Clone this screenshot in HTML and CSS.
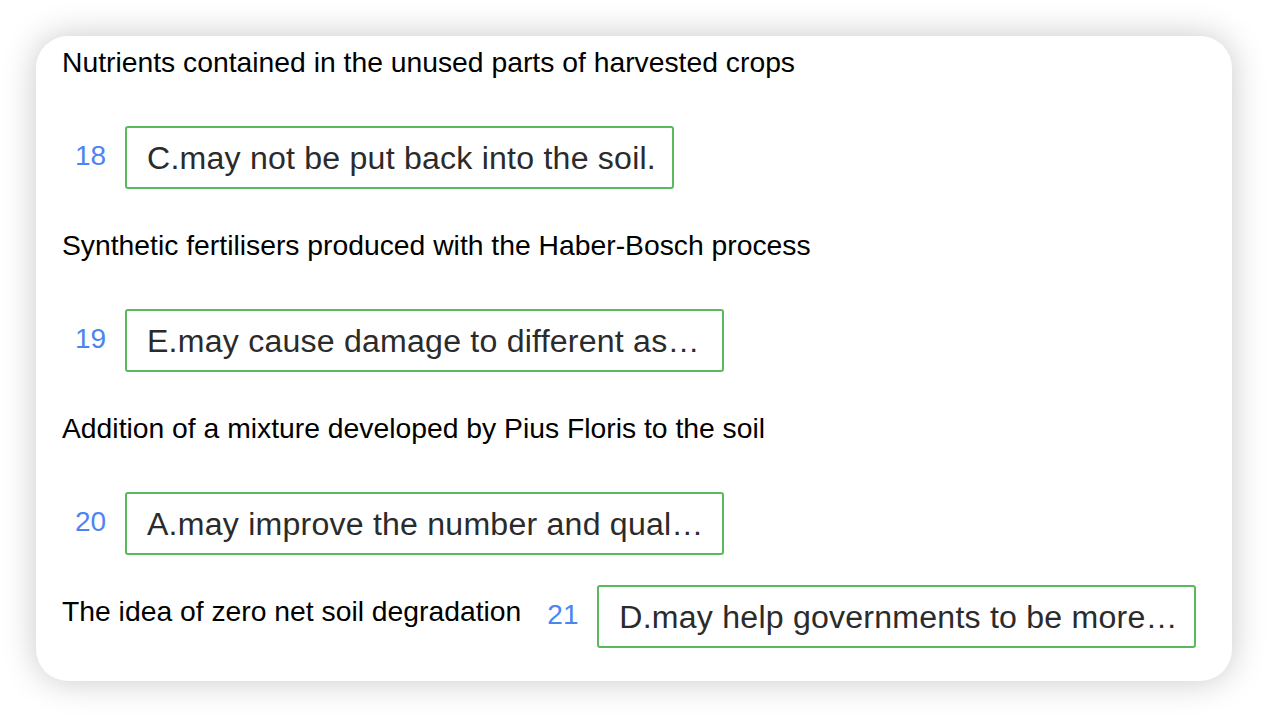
FILE: index.html
```html
<!DOCTYPE html>
<html lang="en">
<head>
<meta charset="utf-8">
<title>Matching</title>
<link rel="stylesheet" href="styles.css">
</head>
<body>
<div class="card">
  <div class="item">
    <span class="label">Nutrients contained in the unused parts of harvested crops</span>
    <span class="answer"><span class="num">18</span><span class="box">C.may not be put back into the soil.</span></span>
  </div>
  <div class="item">
    <span class="label">Synthetic fertilisers produced with the Haber-Bosch process</span>
    <span class="answer"><span class="num">19</span><span class="box">E.may cause damage to different aspects of the environment.</span></span>
  </div>
  <div class="item">
    <span class="label">Addition of a mixture developed by Pius Floris to the soil</span>
    <span class="answer"><span class="num">20</span><span class="box">A.may improve the number and quality of crops.</span></span>
  </div>
  <div class="item">
    <span class="label">The idea of zero net soil degradation</span>
    <span class="answer"><span class="num">21</span><span class="box">D.may help governments to be more aware of soil issues.</span></span>
  </div>
</div>
</body>
</html>
```

FILE: styles.css
```css
html, body {
  margin: 0;
  padding: 0;
  background: #ffffff;
}
body {
  font-family: "Liberation Sans", Arial, Helvetica, sans-serif;
  padding: 36px;
}
.card {
  width: 1196px;
  box-sizing: border-box;
  background: #fff;
  border-radius: 32px;
  box-shadow: 0 0 34px rgba(0, 0, 0, 0.22);
  padding: 11px 26px 33px 26px;
  display: flex;
  flex-direction: column;
  gap: 41px;
}
.item {
  display: flex;
  flex-wrap: wrap;
  align-items: flex-start;
  row-gap: 60px;
}
.label {
  font-size: 28.3px;
  line-height: 30px;
  color: #000;
  margin-right: 13px;
}
.answer {
  display: flex;
  align-items: center;
  margin-top: -11px;
  margin-left: 13px;
}
.num {
  font-size: 28px;
  color: #4d84f4;
  width: 50px;
  margin-top: -4px;
}
.box {
  display: block;
  max-width: 559px;
  height: 59px;
  line-height: 61px;
  border: 2px solid #5cb85c;
  border-radius: 3px;
  padding: 0 16px 0 20px;
  font-size: 32.1px;
  letter-spacing: 0.22px;
  color: #2b2b2b;
  white-space: nowrap;
  overflow: hidden;
  text-overflow: ellipsis;
}
```
